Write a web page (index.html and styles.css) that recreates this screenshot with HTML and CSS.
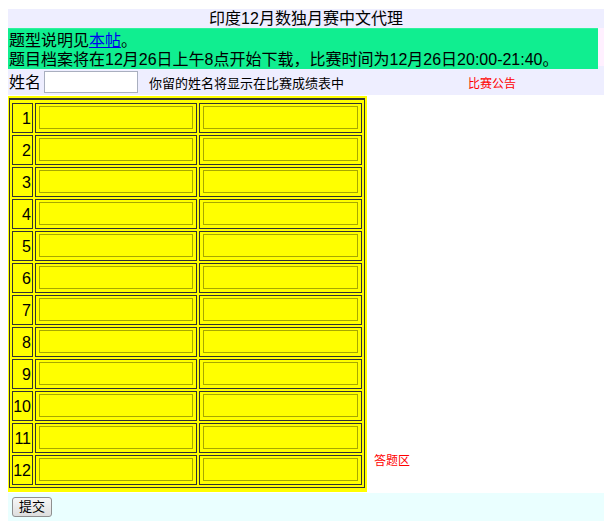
FILE: index.html
```html
<!DOCTYPE html>
<html lang="zh-CN">

<head>
    <meta charset="UTF-8">
    <title>印度12月数独月赛中文代理</title>
    <link rel="stylesheet" href="styles.css">
</head>

<body>
    <div class="page">
        <div class="title">印度12月数独月赛中文代理</div>

        <div class="notice-row">
            <div class="notice">
                <div class="notice-text">
                    题型说明见<a href="#">本帖</a>。<br>
                    题目档案将在12月26日上午8点开始下载，比赛时间为12月26日20:00-21:40。
                </div>
            </div>
        </div>

        <div class="name-row">
            <span class="name-label">姓名</span>
            <input type="text" class="name-input">
            <span class="name-hint">你留的姓名将显示在比赛成绩表中</span>
            <span class="announce">比赛公告</span>
        </div>

        <div class="main">
            <div class="answer-box">
                <table class="answers" id="answers"></table>
            </div>
            <div class="answer-label">答题区</div>
        </div>

        <div class="submit-row">
            <button class="submit-btn">提交</button>
        </div>
    </div>

    <script>
        const table = document.getElementById('answers');
        for (let i = 1; i <= 12; i++) {
            const row = document.createElement('tr');
            row.innerHTML = '<td class="num">' + i + '</td>' +
                '<td class="cell"><input type="text"></td>' +
                '<td class="cell"><input type="text"></td>';
            table.appendChild(row);
        }
    </script>
</body>

</html>
```

FILE: styles.css
```css
body {
    margin: 8px;
    background: #fff;
    font-family: "Liberation Sans", "Noto Sans CJK SC", sans-serif;
    font-size: 16px;
    color: #000;
}

.page {
    width: 596px;
    margin-top: 1px;
}

.title {
    background: #eeeeff;
    height: 19px;
    line-height: 19px;
    text-align: center;
}

.notice-row {
    background: #eeeeff;
    padding: 3px 0;
}

.notice {
    background: #fff0ff;
    height: 38px;
}

.notice-text {
    background: #10ee90;
    margin: -3px 6px 0 -3px;
    padding: 2px 4px 4px 4px;
    line-height: 19px;
    border-top: 1px solid #2ef29d;
    border-bottom: 1px solid #2ef29d;
    box-sizing: border-box;
    height: 44px;
}

.notice-text a {
    color: #0000ee;
}

.name-row {
    background: #eeeeff;
    height: 26px;
    display: flex;
    align-items: center;
    padding-left: 1px;
}

.name-label {
    line-height: 19px;
}

.name-input {
    width: 94px;
    height: 22px;
    box-sizing: border-box;
    margin: 0 0 0 3px;
    border: 1px solid #a9afbf;
    background: #fff;
    padding: 0 2px;
}

.name-hint {
    font-size: 13px;
    margin-left: 11px;
}

.announce {
    font-size: 12px;
    color: #ff0000;
    margin-left: 124px;
}

.main {
    display: flex;
    align-items: flex-end;
    margin-top: 1px;
}

.answer-box {
    background: #ffff00;
    padding: 2px 2px 4px 2px;
    margin-left: -1px;
}

.answers {
    border: 1px solid #333;
    border-collapse: separate;
    border-spacing: 2px;
    border-top-width: 2px;
    padding-top: 1px;
}

.answers td {
    border: 1px solid #333;
    height: 28px;
    padding: 0;
}

.answers .num {
    width: 18px;
    text-align: right;
    padding-right: 1px;
    line-height: 19px;
}

.answers .cell {
    padding: 2px 3px 3px 3px;
    box-sizing: border-box;
}

.answers .cell input {
    display: block;
    width: 100%;
    height: 23px;
    box-sizing: border-box;
    margin: 0;
    border: 1px solid #a8a800;
    background: #ffff00;
}

.answers td:nth-child(2) {
    width: 162px;
}

.answers td:nth-child(3) {
    width: 163px;
}

.answer-label {
    font-size: 12px;
    line-height: 14px;
    color: #ff0000;
    margin: 0 0 24px 7px;
}

.submit-row {
    background: #eaffff;
    height: 28px;
    padding: 4px 0 0 4px;
    box-sizing: border-box;
    margin-top: 1px;
}

.submit-btn {
    font-family: "Liberation Sans", "Noto Sans CJK SC", sans-serif;
    font-size: 13px;
    width: 40px;
    height: 20px;
    padding: 0;
    line-height: 18px;
    border: 1px solid #8f8f8f;
    border-radius: 3px;
    background: linear-gradient(#f7f7f7, #dedede);
    color: #000;
}
```
